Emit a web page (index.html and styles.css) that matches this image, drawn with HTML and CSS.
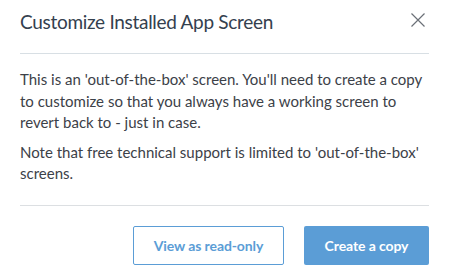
FILE: index.html
```html
<!DOCTYPE html>
<html lang="en">

<head>
    <meta charset="UTF-8">
    <meta name="viewport" content="width=device-width, initial-scale=1.0">
    <title>Customize Installed App Screen</title>
    <link rel="stylesheet" href="styles.css">
</head>

<body>
    <div class="modal">
        <!-- Cabeçalho -->
        <div class="modal-header">
            <h2 class="modal-title">Customize Installed App Screen</h2>
            <button class="fechar" aria-label="Close">
                <svg width="14" height="14" viewBox="0 0 14 14">
                    <path d="M0.5 0.5 L13.5 13.5 M13.5 0.5 L0.5 13.5" stroke="#6b7077" stroke-width="1.2" fill="none" />
                </svg>
            </button>
        </div>

        <!-- Conteúdo -->
        <div class="modal-body">
            <p>This is an 'out-of-the-box' screen. You'll need to create a copy to customize so that you always have a working screen to revert back to - just in case.</p>
            <p>Note that free technical support is limited to 'out-of-the-box' screens.</p>
        </div>

        <!-- Rodapé -->
        <div class="modal-footer">
            <button class="botao botao-secundario">View as read-only</button>
            <button class="botao botao-primario">Create a copy</button>
        </div>
    </div>
</body>

</html>
```

FILE: styles.css
```css
/* Configuração geral */
body {
    margin: 0;
    padding: 0;
    font-family: 'Lato', 'Liberation Sans', sans-serif;
    background: #fff;
    color: #3c4148;
}

.modal {
    width: 449px;
    padding: 0 20px;
    box-sizing: border-box;
}

.modal-header {
    display: flex;
    justify-content: space-between;
    align-items: center;
    height: 43px;
    padding-bottom: 10px;
    border-bottom: 1px solid #d8dfe4;
}

.modal-title {
    margin: 0;
    font-size: 19px;
    font-weight: 400;
    letter-spacing: -0.3px;
    color: #34404e;
}

.fechar {
    background: none;
    border: none;
    padding: 0;
    margin: 0 4px 4px 0;
    display: flex;
    cursor: pointer;
}

.modal-body {
    padding: 15px 0 20px;
    border-bottom: 1px solid #dcdfe2;
}

.modal-body p {
    margin: 0 0 8px;
    font-size: 15px;
    line-height: 21.5px;
}

.modal-body p:last-child {
    margin-bottom: 0;
}

/* Botões */
.modal-footer {
    display: flex;
    justify-content: flex-end;
    gap: 20px;
    padding-top: 20px;
}

.botao {
    height: 39px;
    font-family: inherit;
    font-size: 14px;
    font-weight: bold;
    letter-spacing: -0.1px;
    border-radius: 2px;
    cursor: pointer;
}

.botao-secundario {
    width: 151px;
    background: #fff;
    color: #5b9dd6;
    border: 1px solid #5b9dd6;
}

.botao-primario {
    width: 125px;
    background: #5b9dd6;
    color: #fff;
    border: none;
}
```
